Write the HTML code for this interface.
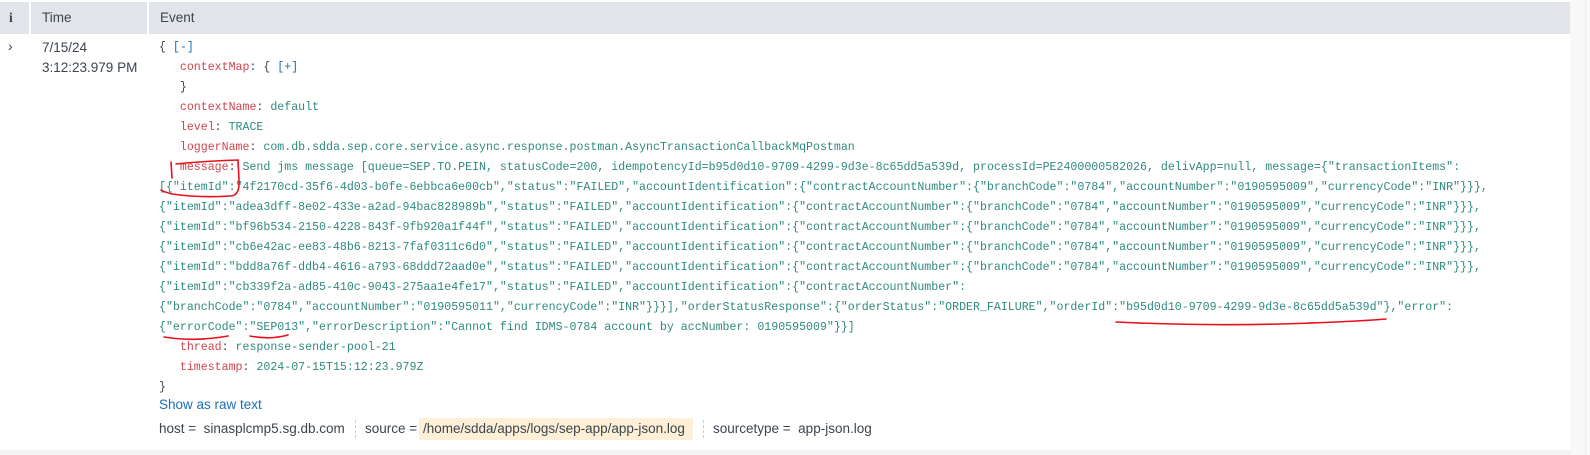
<!DOCTYPE html>
<html><head><meta charset="utf-8"><style>
body{margin:0;width:1590px;height:455px;background:#fff;position:relative;overflow:hidden;font-family:"Liberation Sans",sans-serif;}
.hdr{position:absolute;top:2px;left:0;width:1570px;height:32px;background:#e1e5ea;}
.hdr div{position:absolute;top:0;height:32px;line-height:32px;font-size:13.5px;color:#3c444d;}
.sep{position:absolute;top:2px;width:2px;height:32px;background:#fff;}
.right{position:absolute;left:1570px;top:0;width:20px;height:455px;background:#f8f8f8;}
.rline{position:absolute;left:1585px;top:0;width:1px;height:455px;background:#eee;}
.bot{position:absolute;left:0;top:450px;width:1570px;height:5px;background:#f2f3f5;}
.mono{position:absolute;left:159px;font-family:"Liberation Mono",monospace;font-size:11.6px;color:#2f8a80;white-space:pre;line-height:20px;}
.k{color:#d0454f;}
.b{color:#1c6fb5;}
.p{color:#3c444d;}
.t{position:absolute;left:42px;font-size:13.5px;color:#3c444d;}
</style></head><body>
<div class="hdr"><div style="left:9px;font-weight:bold;font-family:'Liberation Serif',serif;">i</div><div style="left:42px">Time</div><div style="left:160px">Event</div></div>
<div class="sep" style="left:29px"></div><div class="sep" style="left:147px"></div>
<div class="right"></div><div class="rline"></div><div class="bot"></div>
<div style="position:absolute;left:8px;top:38px;font-size:14px;color:#3c444d;">›</div>
<div class="t" style="top:40px">7/15/24</div>
<div class="t" style="top:60px">3:12:23.979 PM</div>
<div class="mono" style="top:38px"><span class="p">{ </span><span class="b">[-]</span>
   <span class="k">contextMap</span><span class="p">: { </span><span class="b">[+]</span>
   <span class="p">}</span>
   <span class="k">contextName</span><span class="p">: </span>default
   <span class="k">level</span><span class="p">: </span>TRACE
   <span class="k">loggerName</span><span class="p">: </span>com.db.sdda.sep.core.service.async.response.postman.AsyncTransactionCallbackMqPostman
   <span class="k">message</span><span class="p">: </span>Send jms message [queue=SEP.TO.PEIN, statusCode=200, idempotencyId=b95d0d10-9709-4299-9d3e-8c65dd5a539d, processId=PE2400000582026, delivApp=null, message={"transactionItems":
[{"itemId":"4f2170cd-35f6-4d03-b0fe-6ebbca6e00cb","status":"FAILED","accountIdentification":{"contractAccountNumber":{"branchCode":"0784","accountNumber":"0190595009","currencyCode":"INR"}}},
{"itemId":"adea3dff-8e02-433e-a2ad-94bac828989b","status":"FAILED","accountIdentification":{"contractAccountNumber":{"branchCode":"0784","accountNumber":"0190595009","currencyCode":"INR"}}},
{"itemId":"bf96b534-2150-4228-843f-9fb920a1f44f","status":"FAILED","accountIdentification":{"contractAccountNumber":{"branchCode":"0784","accountNumber":"0190595009","currencyCode":"INR"}}},
{"itemId":"cb6e42ac-ee83-48b6-8213-7faf0311c6d0","status":"FAILED","accountIdentification":{"contractAccountNumber":{"branchCode":"0784","accountNumber":"0190595009","currencyCode":"INR"}}},
{"itemId":"bdd8a76f-ddb4-4616-a793-68ddd72aad0e","status":"FAILED","accountIdentification":{"contractAccountNumber":{"branchCode":"0784","accountNumber":"0190595009","currencyCode":"INR"}}},
{"itemId":"cb339f2a-ad85-410c-9043-275aa1e4fe17","status":"FAILED","accountIdentification":{"contractAccountNumber":
{"branchCode":"0784","accountNumber":"0190595011","currencyCode":"INR"}}}],"orderStatusResponse":{"orderStatus":"ORDER_FAILURE","orderId":"b95d0d10-9709-4299-9d3e-8c65dd5a539d"},"error":
{"errorCode":"SEP013","errorDescription":"Cannot find IDMS-0784 account by accNumber: 0190595009"}}]
   <span class="k">thread</span><span class="p">: </span>response-sender-pool-21
   <span class="k">timestamp</span><span class="p">: </span>2024-07-15T15:12:23.979Z
<span class="p">}</span></div>
<div style="position:absolute;left:159px;top:397px;font-size:13.5px;color:#1c6fb5;">Show as raw text</div>
<div style="position:absolute;left:159px;top:421px;font-size:13.5px;color:#3c444d;white-space:pre;">host =  sinasplcmp5.sg.db.com</div>
<div style="position:absolute;left:355px;top:420px;height:18px;border-left:1px dashed #ccc;"></div>
<div style="position:absolute;left:365px;top:421px;font-size:13.5px;color:#3c444d;white-space:pre;">source = </div>
<div style="position:absolute;left:419px;top:418px;height:22px;width:274px;background:#fdf0d6;"></div>
<div style="position:absolute;left:423px;top:421px;font-size:13.5px;color:#3c444d;white-space:pre;">/home/sdda/apps/logs/sep-app/app-json.log</div>
<div style="position:absolute;left:703px;top:420px;height:18px;border-left:1px dashed #ccc;"></div>
<div style="position:absolute;left:713px;top:421px;font-size:13.5px;color:#3c444d;white-space:pre;">sourcetype =  app-json.log</div>
<svg style="position:absolute;left:0;top:0" width="1590" height="455" fill="none" stroke="#e8101a" stroke-width="1.6" stroke-linecap="round">
<path d="M171 162 L172 178"/>
<path d="M176 164 Q205 161 238 160 L239 180 Q240 196 230 196 Q200 198 172 194 Q164 192 161 190"/>
<path d="M164 337 Q195 342 228 336"/>
<path d="M250 336 Q270 340 288 335"/>
<path d="M1116 322 Q1200 326 1280 324 Q1350 322 1386 319"/>
</svg>
</body></html>
